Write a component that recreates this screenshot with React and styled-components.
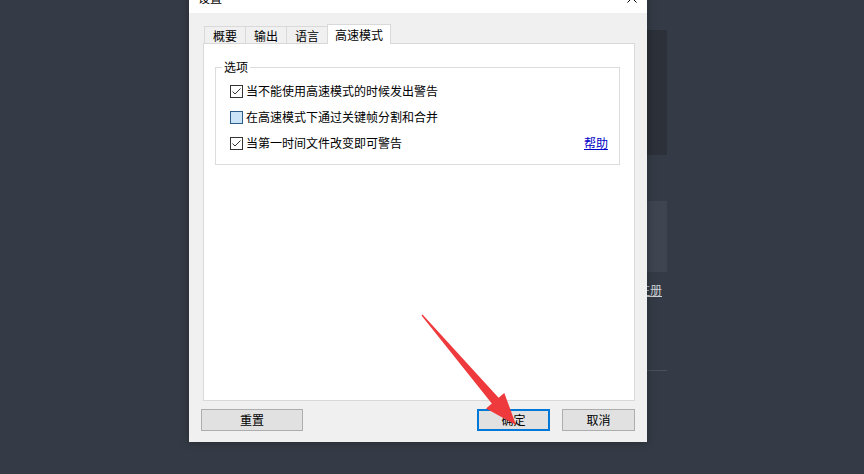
import React from "react";
import styled, { createGlobalStyle } from "styled-components";

const GlobalStyle = createGlobalStyle`
  html, body { margin: 0; padding: 0; background: #353b46; overflow: hidden; }
  body { font-family: "Noto Sans CJK SC", "Microsoft YaHei", sans-serif; }
`;

const Screen = styled.div`
  position: relative;
  width: 864px;
  height: 474px;
  overflow: hidden;
  background: #353b46;
  font-family: "Noto Sans CJK SC", sans-serif;
  font-size: 12px;
  color: #000;
`;

/* app behind the dialog */
const Backdrop = styled.div`
  width: 470px;
  margin-left: 197px;
  padding-top: 30px;
  display: flex;
  flex-direction: column;
`;
const DarkPanel = styled.div`
  height: 125px;
  background: #2b3039;
`;
const LightPanel = styled.div`
  height: 71px;
  margin-top: 46px;
  background: #3e4551;
`;
const RegisterLink = styled.a`
  align-self: flex-end;
  margin-top: 11px;
  margin-right: 5px;
  line-height: 14px;
  font-size: 12px;
  color: #cfd2d6;
  text-decoration: underline;
`;
const Divider = styled.div`
  margin-top: 73px;
  height: 1px;
  background: #4b515b;
`;

/* dialog window */
const Dialog = styled.div`
  position: absolute;
  left: 189px;
  top: -17px;
  width: 458px;
  height: 459px;
  background: #f0f0f0;
  display: flex;
  flex-direction: column;
  box-shadow: 0 0 8px rgba(0, 0, 0, 0.35);
`;
const TitleBar = styled.div`
  height: 30px;
  flex: none;
  background: #fff;
  display: flex;
  align-items: center;
  justify-content: space-between;
  padding: 0 10px 0 9px;
  line-height: 14px;
`;
const Body = styled.div`
  flex: 1;
  display: flex;
  flex-direction: column;
  padding: 11px 12px 11px 12px;
  min-height: 0;
`;
const TabStrip = styled.div`
  height: 19px;
  flex: none;
  display: flex;
  align-items: flex-end;
  padding-left: 3px;
`;
const Tab = styled.div`
  position: relative;
  box-sizing: border-box;
  height: ${(p) => (p.$active ? "20px" : "17px")};
  margin-bottom: ${(p) => (p.$active ? "-1px" : "0")};
  margin-right: -1px;
  z-index: ${(p) => (p.$active ? 1 : 0)};
  padding: ${(p) => (p.$active ? "2px 7px 0" : "1px 8px 0")};
  border: 1px solid #d9d9d9;
  border-bottom: none;
  background: ${(p) => (p.$active ? "#fff" : "#f0f0f0")};
  line-height: 16px;
  white-space: nowrap;
`;
const Pane = styled.div`
  flex: 1;
  margin-left: 2px;
  border: 1px solid #d9d9d9;
  background: #fff;
  padding: 0 14px 0 11px;
  min-height: 0;
`;
const GroupBox = styled.fieldset`
  margin: 16px 0 0 0;
  padding: 4px 11px 8px 14px;
  border: 1px solid #dcdcdc;
  min-width: 0;
`;
const Legend = styled.legend`
  padding: 0 2px;
  margin-left: -8px;
  line-height: 14px;
  font-size: 12px;
`;
const Row = styled.div`
  height: 26px;
  display: flex;
  align-items: center;
  line-height: 14px;
`;
const Box = styled.span`
  width: 13px;
  height: 13px;
  box-sizing: border-box;
  flex: none;
  border: 1px solid ${(p) => (p.$hover ? "#2c5d8a" : "#333")};
  background: ${(p) => (p.$hover ? "#cce4f7" : "#fff")};
  margin-right: 3px;
  display: flex;
  align-items: center;
  justify-content: center;
`;
const HelpLink = styled.a`
  margin-left: auto;
  color: #0000c8;
  text-decoration: underline;
`;
const ButtonRow = styled.div`
  flex: none;
  margin-top: 8px;
  display: flex;
  gap: 12px;
`;
const Button = styled.button`
  height: 22px;
  width: ${(p) => (p.$wide ? "102px" : "73px")};
  box-sizing: border-box;
  margin-left: ${(p) => (p.$push ? "auto" : "0")};
  background: #e1e1e1;
  border: ${(p) => (p.$default ? "2px solid #0078d7" : "1px solid #adadad")};
  font-family: "Noto Sans CJK SC", sans-serif;
  font-size: 12px;
  line-height: 14px;
  color: #000;
  padding: 0;
`;
const Overlay = styled.svg`
  position: absolute;
  left: 0;
  top: 0;
  pointer-events: none;
`;

const Check = ({ checked, hover, children }) => (
  <>
    <Box $hover={hover}>
      {checked && (
        <svg width="11" height="11" viewBox="0 0 11 11">
          <path d="M1.5 5.5 L4 8 L9.5 2.5" fill="none" stroke="#333" strokeWidth="1" />
        </svg>
      )}
    </Box>
    <span>{children}</span>
  </>
);

export default function App() {
  return (
    <Screen>
      <GlobalStyle />
      <Backdrop>
        <DarkPanel />
        <LightPanel />
        <RegisterLink>注册</RegisterLink>
        <Divider />
      </Backdrop>

      <Dialog>
        <TitleBar>
          <span>设置</span>
          <svg width="10" height="10" viewBox="0 0 10 10">
            <path d="M0.5 0.5 L9.5 9.5 M9.5 0.5 L0.5 9.5" stroke="#000" strokeWidth="1" />
          </svg>
        </TitleBar>
        <Body>
          <TabStrip>
            <Tab>概要</Tab>
            <Tab>输出</Tab>
            <Tab>语言</Tab>
            <Tab $active>高速模式</Tab>
          </TabStrip>
          <Pane>
            <GroupBox>
              <Legend>选项</Legend>
              <Row>
                <Check checked>当不能使用高速模式的时候发出警告</Check>
              </Row>
              <Row>
                <Check hover>在高速模式下通过关键帧分割和合并</Check>
              </Row>
              <Row>
                <Check checked>当第一时间文件改变即可警告</Check>
                <HelpLink>帮助</HelpLink>
              </Row>
            </GroupBox>
          </Pane>
          <ButtonRow>
            <Button $wide>重置</Button>
            <Button $push $default>确定</Button>
            <Button>取消</Button>
          </ButtonRow>
        </Body>
      </Dialog>

      <Overlay width="864" height="474" viewBox="0 0 864 474">
        <polygon
          points="422.5,314.6 498.6,397.8 504.3,392.9 516,425 486.1,408.5 491.8,403.6 421.5,315.4"
          fill="#ee3a3d"
        />
      </Overlay>
    </Screen>
  );
}
